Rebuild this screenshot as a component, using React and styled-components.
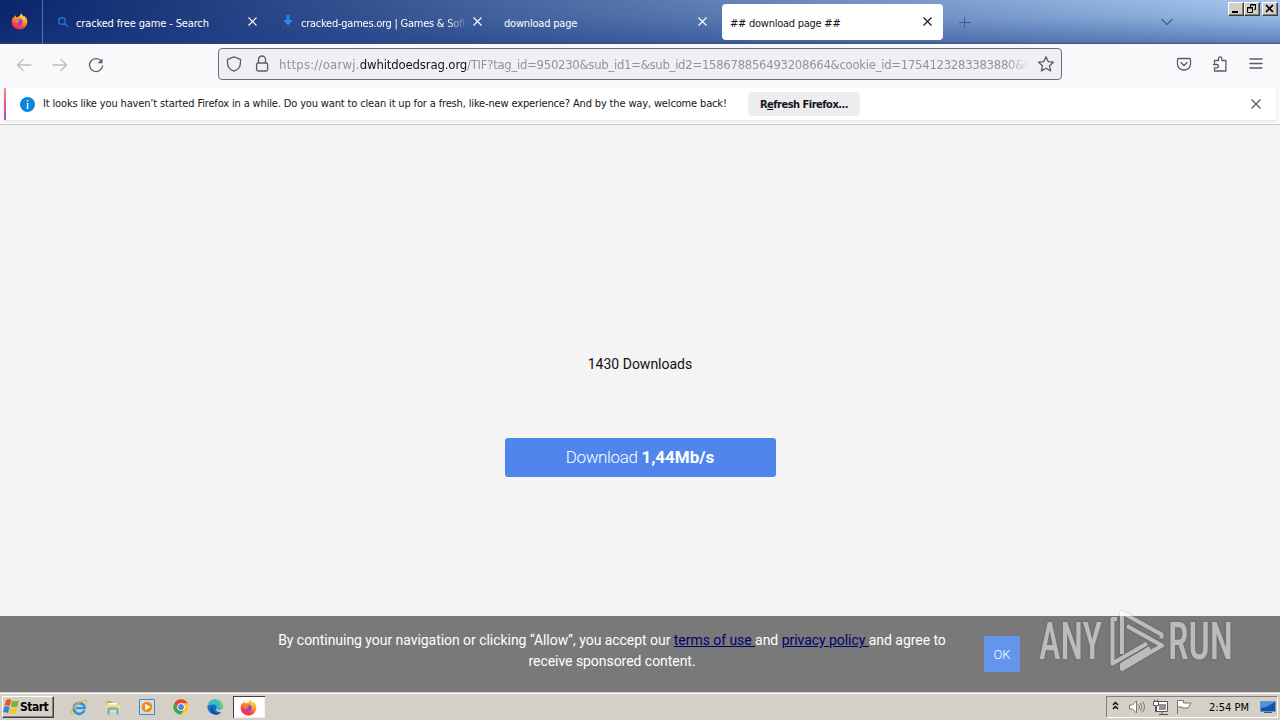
import React from "react";
import styled, { createGlobalStyle } from "styled-components";

const GlobalStyle = createGlobalStyle`
  * {
    box-sizing: border-box;
  }
  body {
    margin: 0;
    overflow: hidden;
    font-family: "DejaVu Sans Condensed", "DejaVu Sans", sans-serif;
    font-stretch: condensed;
    font-size: 11px;
    color: #15141a;
  }
  svg {
    display: block;
    flex: none;
  }
`;

const Desktop = styled.div`
  display: flex;
  flex-direction: column;
  width: 1280px;
  height: 720px;
  overflow: hidden;
`;

const Text = styled.span`
  white-space: pre;
  letter-spacing: ${p => p.$track || 0}px;
`;

/* ---------- tab strip ---------- */

const TitleBar = styled.div`
  display: flex;
  height: 44px;
  background:
    linear-gradient(to bottom, transparent 42px, rgba(60, 70, 100, 0.55) 43px),
    linear-gradient(to bottom, rgba(25, 60, 140, 0) 0%, rgba(25, 60, 140, 0.12) 40%, rgba(25, 60, 140, 0.52) 100%),
    linear-gradient(to right, #0a246a, #a6caf0);
`;

const FirefoxView = styled.div`
  display: flex;
  align-items: center;
  justify-content: center;
  width: 43px;
  padding: 0 3px 1px 0;
  border-right: 1px solid #5a6fa5;
`;

const Tabs = styled.div`
  display: flex;
  padding-left: 2px;
`;

const Tab = styled.div`
  display: flex;
  align-items: center;
  width: ${p => (p.$active ? 221 : 225)}px;
  height: ${p => (p.$active ? 36 : 44)}px;
  margin: ${p => (p.$active ? "4px 2px" : "0")};
  padding: ${p => (p.$active ? "2px 11px 0 8px" : "2px 13px 0 9px")};
  border-radius: 4px;
  background: ${p => (p.$active ? "#fff" : "transparent")};
  color: ${p => (p.$active ? "#15141a" : "#fff")};
`;

const TabIcon = styled.span`
  width: 19px;
  margin-left: 3px;
  padding-bottom: 2px;
`;

const TabLabel = styled.div`
  flex: 1;
  overflow: hidden;
  white-space: nowrap;
  mask-image: ${p => (p.$fade ? "linear-gradient(to left, transparent, #000 22px)" : "none")};
  margin-right: ${p => (p.$fade ? 5 : 10)}px;
`;

const TabClose = styled.span`
  padding-bottom: 3px;
`;

const StripButton = styled.div`
  display: flex;
  align-items: center;
  justify-content: center;
  width: 40px;
  height: 44px;
`;

const Spacer = styled.div`
  flex: 1;
`;

const WindowButtons = styled.div`
  display: flex;
  margin: 2px 2px 0 41px;
`;

const WindowButton = styled.div`
  display: flex;
  width: 16px;
  height: 14px;
  margin-left: ${p => p.$gap || 0}px;
  background: #d4d0c8;
  border: 1px solid;
  border-color: #fff #404040 #404040 #fff;
  box-shadow: inset -1px -1px #808080;
`;

/* ---------- navigation ---------- */

const NavBar = styled.div`
  display: flex;
  align-items: center;
  height: 44px;
  padding: 0 16px 4px;
  background: #f9f9fb;
`;

const NavButtons = styled.div`
  display: flex;
  gap: 20px;
  width: 202px;
  padding-top: 1px;
`;

const UrlBar = styled.div`
  display: flex;
  align-items: center;
  width: 844px;
  height: 32px;
  padding: 0 7px;
  border: 1px solid #6c6b73;
  border-radius: 4px;
  background: #f0f0f4;
`;

const Address = styled.div`
  flex: 1;
  margin: 0 7px 0 9px;
  padding-top: 1px;
  overflow: hidden;
  white-space: nowrap;
  font-size: 13px;
  color: #93929a;
  mask-image: linear-gradient(to left, transparent, #000 24px);
`;

const Domain = styled.span`
  color: #15141a;
`;

const ToolIcons = styled.div`
  display: flex;
  gap: 20px;
`;

/* ---------- notification ---------- */

const NoticeStrip = styled.div`
  height: 37px;
  padding: 0 4px;
  background: #f9f9fb;
  border-bottom: 1px solid #cccccf;
`;

const Notice = styled.div`
  display: flex;
  align-items: center;
  height: 32px;
  padding: 0 15px 0 14px;
  border-left: 2px solid;
  border-image: linear-gradient(to bottom, #ff9a6c, #e7548f 45%, #9059d6) 1;
  background: #fff;
  box-shadow: 0 1px 2px rgba(58, 57, 68, 0.12);
`;

const NoticeText = styled.div`
  width: 713px;
  padding: 0 0 2px 8px;
`;

const RefreshButton = styled.div`
  width: 112px;
  height: 24px;
  line-height: 25px;
  text-align: center;
  font-weight: 700;
  border-radius: 4px;
  background: #ededf0;
`;

/* ---------- page ---------- */

const Page = styled.main`
  display: flex;
  flex-direction: column;
  align-items: center;
  height: 491px;
  padding-top: 229px;
  background: #f4f4f4;
  font-family: Roboto, sans-serif;
  font-stretch: normal;
`;

const Count = styled.div`
  height: 20px;
  line-height: 20px;
  font-size: 14px;
  color: #111;
`;

const DownloadButton = styled.div`
  width: 271px;
  height: 39px;
  margin-top: 64px;
  line-height: 39px;
  text-align: center;
  font-size: 17px;
  font-weight: 300;
  color: #fff;
  border-radius: 3px;
  background: #5086ec;
  b {
    font-weight: 700;
  }
`;

const Consent = styled.div`
  display: flex;
  height: 76px;
  padding: 14px 0 0 262px;
  background: #797979;
  font-family: Roboto, sans-serif;
  font-stretch: normal;
  color: #fff;
`;

const ConsentText = styled.div`
  width: 700px;
  text-align: center;
  font-size: 14px;
  letter-spacing: -0.045px;
  line-height: 21px;
  a {
    color: #00006e;
    text-decoration: underline;
  }
`;

const OkButton = styled.div`
  width: 36px;
  height: 36px;
  margin: 6px 0 0 22px;
  line-height: 37px;
  text-align: center;
  font-size: 13px;
  font-weight: 300;
  background: #6495ed;
`;

const Watermark = styled.svg`
  position: absolute;
  left: 1030px;
  top: 604px;
  filter: drop-shadow(0 0 1px rgba(0, 0, 0, 0.5));
`;

/* ---------- taskbar ---------- */

const Taskbar = styled.div`
  display: flex;
  align-items: center;
  height: 28px;
  padding: 2px 2px 0 2px;
  background: #d4d0c8;
  box-shadow: inset 0 1px #d4d0c8, inset 0 2px #fff;
  color: #000;
`;

const StartButton = styled.div`
  display: flex;
  align-items: center;
  width: 52px;
  height: 22px;
  font-weight: 700;
  font-size: 12px;
  border: 1px solid;
  border-color: #fff #404040 #404040 #fff;
  box-shadow: inset -1px -1px #808080;
`;

const QuickLaunch = styled.div`
  display: flex;
  padding-left: 8px;
`;

const TaskItem = styled.div`
  display: flex;
  align-items: center;
  justify-content: center;
  width: ${p => (p.$active ? 32 : 34)}px;
  height: 22px;
  margin-left: ${p => (p.$active ? 1 : 0)}px;
  padding-right: ${p => (p.$active ? 1 : 0)}px;
  background: ${p => (p.$active ? "#fff" : "transparent")};
  box-shadow: ${p => (p.$active ? "inset 1px 1px #404040, inset -1px -1px #f4f2ee" : "none")};
`;

const Tray = styled.div`
  display: flex;
  align-items: center;
  width: 172px;
  height: 22px;
  padding-left: 5px;
  border: 1px solid;
  border-color: #808080 #fff #fff #808080;
`;

const Clock = styled.div`
  width: 58px;
  padding-right: 4px;
  text-align: center;
`;

/* ---------- icons ---------- */

const Cross = ({ color = "#fff", size = 9 }) => (
  <svg width={size} height={size} viewBox="0 0 9 9" stroke={color} strokeWidth="1.1">
    <path d="M.5.5l8 8M8.5.5l-8 8" />
  </svg>
);

const Stroke = ({ size = 16, color = "#5b5b66", width = 1.3, children }) => (
  <svg
    width={size}
    height={size}
    viewBox="0 0 16 16"
    fill="none"
    stroke={color}
    strokeWidth={width}
    strokeLinecap="round"
    strokeLinejoin="round"
  >
    {children}
  </svg>
);

const FirefoxLogo = () => (
  <svg width="17" height="17" viewBox="0 0 17 17">
    <defs>
      <linearGradient id="fox" x1=".8" y1="0" x2=".3" y2="1">
        <stop offset="0" stopColor="#ffe34a" />
        <stop offset=".45" stopColor="#ff9528" />
        <stop offset=".75" stopColor="#fa3c4c" />
        <stop offset="1" stopColor="#e22775" />
      </linearGradient>
    </defs>
    <path
      fill="url(#fox)"
      d="M10.2.3c.4 1.8 1.5 2.3 2.6 3.5.2-.6.1-1 0-1.4 2 1.3 3.5 3.6 3.5 6.1 0 4.5-3.5 8-7.9 8S.7 13 .7 8.8c0-2 .6-3.7 1.7-5 0 .5 0 .8.3 1.1.4-1.3 1.1-2 2-2.6-.1.8.1 1.4.5 1.9C7 4.2 9.5 3 10.2.3z"
    />
    <circle cx="8.3" cy="8.9" r="3.2" fill="#8645d8" />
    <path fill="#ff7b2e" d="M3.5 6.2c1.500-1.200 3.200-1 4.300 0 .8.5 1.500.4 1.600.8-.3.7-1.300.8-1.900 1.300-.5.5-.3 1.300.2 1.700-2.300.9-3.800-1-4.200-3.800z" />
    <path fill="#ffcb3c" d="M10.2.3c-.9 1.100-.7 2.600.2 3.700 1.500 1 2.600 2.700 2.300 5 1.300-1.600 1-3.900.1-5.200-1.100-1.200-2.200-1.700-2.600-3.500z" />
  </svg>
);

const WindowsFlag = () => (
  <svg width="17" height="16" viewBox="0 0 17 16">
    <path fill="#e8542a" d="M3 1.200C4.700 0 6.500 0 8.200 1L6.800 7C5 6 3.500 6 1.500 7z" />
    <path fill="#7cb82f" d="M9 1.500c2 1.200 4.200 1.100 7 0L14.500 7.500c-2.500 1-4.600.9-6.700-.200z" />
    <path fill="#3d7fd1" d="M1.200 8c1.900-1 3.600-.9 5.400.1L5 14C3.300 13-.3 13 0 13.600z" />
    <path fill="#f9c32d" d="M7.500 8.500c2 1.100 4.200 1.200 6.700.200l-1.600 5.600c-2.400 1.100-4.500.9-6.700-.1z" />
  </svg>
);

const IeLogo = () => (
  <svg width="18" height="18" viewBox="0 0 18 18" fill="none">
    <path d="M14.3 12.4A5.400 5.400 0 1 1 14.6 10H6" stroke="#2b93d8" strokeWidth="2.700" />
    <path d="M5 8.3h8" stroke="#a8dbf7" strokeWidth="1" />
    <path d="M3.3 15.3C-1 18.500.6 11.500 6.300 6.700 11.500 2.200 17.500.1 16.300 4.900" stroke="#e8b62f" strokeWidth="1.300" />
  </svg>
);

const ExplorerLogo = () => (
  <svg width="18" height="18" viewBox="0 0 18 18">
    <path fill="#e5c15c" d="M2 3h6l1 1.500h7V14H2z" />
    <path fill="#fff" d="M4 5h9v3H4z" />
    <path fill="#52b152" d="M4 3.500h3v1.200H4z" />
    <path fill="#f4dc88" d="M1.500 6.500h15l-.500 7.500h-14z" />
    <path fill="none" stroke="#69b3dd" strokeWidth="2.400" d="M4.500 16.500v-4.700q0-1.300 1.500-1.300h6q1.500 0 1.500 1.300v4.700" />
  </svg>
);

const PlayerLogo = () => (
  <svg width="18" height="18" viewBox="0 0 18 18">
    <path fill="#c7e0f2" stroke="#4a87b8" d="M1.500 1.500h15v15h-15z" />
    <circle cx="9" cy="9" r="5.700" fill="#f38a19" stroke="#fff4de" strokeWidth=".5" />
    <path fill="#fff" d="M7.200 5.700v6.600L12.500 9z" />
  </svg>
);

const ChromeLogo = () => (
  <svg width="16" height="16" viewBox="0 0 16 16">
    <circle cx="8" cy="8" r="7.600" fill="#fcc934" />
    <path fill="#ea4335" d="M1.400 4.200A7.600 7.600 0 0 1 14.6 4.200H8L4.700 9.900z" />
    <path fill="#34a853" d="M1.400 4.200A7.600 7.600 0 0 0 8 15.600L11.300 9.900 4.700 9.900z" />
    <circle cx="8" cy="8" r="3.800" fill="#fff" />
    <circle cx="8" cy="8" r="2.900" fill="#4285f4" />
  </svg>
);

const EdgeLogo = () => (
  <svg width="16" height="16" viewBox="0 0 16 16">
    <circle cx="8" cy="8" r="7.600" fill="#1673c9" />
    <path fill="#35c1c4" d="M.5 7.500C1 3.200 4.200.4 8 .4c4.500 0 7.600 2.900 7.600 6.300 0 2.300-1.600 3.900-4 3.900-1.800 0-2.400-.7-2.100-1.300.9-1.800-.5-3.900-3.100-3.900C3.600 5.400 1.500 6.300.5 7.500z" />
    <path fill="#65d563" d="M10 .7c3.400.8 5.600 3.300 5.600 6 0 2-1.300 3.400-3.100 3.800 1.300-3 .8-6.800-2.500-9.800z" />
    <path fill="#114a8b" d="M6.300 7.200c-1.800 3 .7 7 4.500 6.900 1.400 0 2.400-.5 3.300-1.100-2 3.200-6.300 3.300-8.700 1.300-2.300-2-1.900-5.800.9-7.100z" />
    <path fill="#d4d0c8" d="M9.500 9.300c-.3.7.3 1.500 2.100 1.500 1.500 0 2.700-.6 3.400-1.600l1 1.500-2 2c-3 .8-6-.9-4.500-3.400z" />
  </svg>
);

const tabs = [
  {
    title: "cracked free game - Search",
    track: -0.14,
    icon: (
      <svg width="12" height="12" viewBox="0 0 12 12" fill="none" stroke="#2672ce" strokeWidth="1.500">
        <circle cx="5" cy="5" r="3.300" />
        <path d="M7.5 7.500l3.200 3.200" />
      </svg>
    )
  },
  {
    title: "cracked-games.org | Games & Software",
    track: -0.25,
    fade: true,
    icon: (
      <svg width="13" height="14" viewBox="0 0 13 14">
        <path fill="#2389ec" d="M4.500 0h3v5h3.500L6 10.500 1 5h3.500z" />
        <path fill="none" stroke="#3b4a7e" strokeWidth="1.500" d="M1 10v2.500h11V10" />
      </svg>
    )
  },
  { title: "download page", track: -0.2 },
  { title: "## download page ##", track: -0.25, active: true }
];

const TabStrip = () => (
  <TitleBar>
    <FirefoxView>
      <FirefoxLogo />
    </FirefoxView>
    <Tabs>
      {tabs.map(tab => (
        <Tab key={tab.title} $active={tab.active}>
          {tab.icon && <TabIcon>{tab.icon}</TabIcon>}
          <TabLabel $fade={tab.fade}>
            <Text $track={tab.track}>{tab.title}</Text>
          </TabLabel>
          <TabClose>
            <Cross color={tab.active ? "#15141a" : "#fff"} />
          </TabClose>
        </Tab>
      ))}
    </Tabs>
    <StripButton>
      <svg width="12" height="12" viewBox="0 0 12 12" stroke="#455d8c">
        <path d="M5.500 1v11M0 6.500h12" />
      </svg>
    </StripButton>
    <Spacer />
    <StripButton>
      <svg width="12" height="8" viewBox="0 0 12 8" fill="none" stroke="#466596" strokeWidth="1.500">
        <path d="M.5 1L6 6.500 11.500 1" />
      </svg>
    </StripButton>
    <WindowButtons>
      <WindowButton>
        <svg width="14" height="12">
          <path d="M3 8h6v2H3z" />
        </svg>
      </WindowButton>
      <WindowButton>
        <svg width="14" height="12" fill="none" stroke="#000">
          <path d="M5.500 4V1.500h5v5H9M5 2h6M2.500 4.500h5v5h-5zM2 5h6" />
        </svg>
      </WindowButton>
      <WindowButton $gap={2}>
        <svg width="14" height="12" stroke="#000" strokeWidth="1.700">
          <path d="M3 2l7 7M10 2L3 9" />
        </svg>
      </WindowButton>
    </WindowButtons>
  </TitleBar>
);

const Navigation = () => (
  <NavBar>
    <NavButtons>
      <Stroke color="#bdbdc2">
        <path d="M15 8H1.500M7 2.500L1.500 8 7 13.500" />
      </Stroke>
      <Stroke color="#bdbdc2">
        <path d="M1 8h13.500M9 2.500L14.500 8 9 13.500" />
      </Stroke>
      <Stroke>
        <path d="M13.300 4.200A6.500 6.500 0 1 0 14.500 9" />
        <path fill="#5b5b66" d="M14.500 1.500v4.800H9.700z" stroke="none" />
      </Stroke>
    </NavButtons>
    <UrlBar>
      <Stroke>
        <path d="M8 .8l6.500 2.600v3c0 4-2.500 7.300-6.500 8.800C4 13.700 1.500 10.400 1.500 6.400v-3z" />
      </Stroke>
      <svg width="28" height="18" viewBox="0 0 28 18" fill="none" stroke="#5b5b66" strokeWidth="1.300">
        <rect x="14.600" y="8" width="11" height="8" rx="1.500" />
        <path d="M16.500 8V4.500a3.500 3.500 0 0 1 7 0V8" />
      </svg>
      <Address>
        <Text $track={0.22}>https://oarwj.</Text>
        <Domain>
          <Text $track={-0.14}>dwhitdoedsrag.org</Text>
        </Domain>
        <Text $track={-0.29}>/TIF?tag_id=950230&amp;sub_id1=&amp;sub_id2=158678856493208664&amp;cookie_id=1754123283383880&amp;l</Text>
      </Address>
      <Stroke>
        <path d="M8 .8l2.200 4.800 5.200.6-3.900 3.500 1.100 5.200L8 12.300l-4.600 2.600 1.100-5.200L.6 6.200l5.200-.6z" />
      </Stroke>
    </UrlBar>
    <Spacer />
    <ToolIcons>
      <Stroke>
        <path d="M2.500 2.500h11q1 0 1 1V8a6.500 6 0 0 1-13 0V3.500q0-1 1-1zM5 6.500l3 3 3-3" />
      </Stroke>
      <Stroke>
        <path d="M2.500 7V4.500h4V2.500a1.700 1.700 0 0 1 3.400 0v2h4v10.500h-11.400v-3.200h2.300a1.600 1.600 0 0 0 0-3.300H1.500" />
      </Stroke>
      <Stroke>
        <path d="M2 3h12M2 7.500h12M2 12h12" />
      </Stroke>
    </ToolIcons>
  </NavBar>
);

const Notification = () => (
  <NoticeStrip>
    <Notice>
      <svg width="15" height="15" viewBox="0 0 15 15">
        <circle cx="7.500" cy="7.500" r="7.500" fill="#0a84e0" />
        <path fill="#fff" d="M6.800 3h1.500v1.500H6.800zM6.800 6h1.500v6H6.800z" />
      </svg>
      <NoticeText>
        <Text $track={-0.15}>
          It looks like you haven’t started Firefox in a while. Do you want to clean it up for a fresh, like-new experience? And by the way, welcome back!
        </Text>
      </NoticeText>
      <RefreshButton>
        <Text $track={-0.5}>
          R<u>e</u>fresh Firefox...
        </Text>
      </RefreshButton>
      <Spacer />
      <Cross color="#5b5b66" size={10} />
    </Notice>
  </NoticeStrip>
);

const AnyRun = () => (
  <Watermark
    width="250"
    height="84"
    viewBox="0 0 250 84"
    fill="#fff"
    opacity=".5"
    fontFamily="Roboto, sans-serif"
    fontWeight="500"
    fontSize="51"
  >
    <text x="9" y="55" textLength="63" lengthAdjust="spacingAndGlyphs">ANY</text>
    <text x="138" y="55" textLength="65" lengthAdjust="spacingAndGlyphs">RUN</text>
    <g fill="none" stroke="#fff" strokeWidth="4" strokeLinejoin="round">
      <path d="M87 15h-4.500v44.500L117 39.500" />
      <path d="M92 50V8.500L131.500 30.500v4" />
      <path d="M97 22l35 19.500L92 65v-4.500L120 44" />
    </g>
  </Watermark>
);

const TaskBar = () => (
  <Taskbar>
    <StartButton>
      <WindowsFlag />
      <Text $track={-0.5}>Start</Text>
    </StartButton>
    <QuickLaunch>
      <TaskItem>
        <IeLogo />
      </TaskItem>
      <TaskItem>
        <ExplorerLogo />
      </TaskItem>
      <TaskItem>
        <PlayerLogo />
      </TaskItem>
      <TaskItem>
        <ChromeLogo />
      </TaskItem>
      <TaskItem>
        <EdgeLogo />
      </TaskItem>
      <TaskItem $active>
        <FirefoxLogo />
      </TaskItem>
    </QuickLaunch>
    <Spacer />
    <Tray>
      <svg width="90" height="20" viewBox="0 0 90 20" fill="none" stroke="#000">
        <path d="M1 8l2.500-2.500L6 8M1 12l2.500-2.500L6 12" strokeWidth="1.400" />
        <g stroke="#777">
          <path fill="#fff" d="M17.500 8h3l4-4v12l-4-4h-3z" />
          <path d="M26.500 7.500q2 2.500 0 5M28.500 6q3 4 0 8M30.500 4.500q4 5.500 0 11" />
          <path fill="#fff" d="M44.500 4.500h11v10h-11z" stroke="#555" />
          <path fill="#909090" stroke="none" d="M47 7h7v6h-7z" />
          <path d="M47 17.500h9M50 15v2" stroke="#555" />
          <path fill="#fff" d="M41.500 4.500h5v4h-2v6h-1v-6h-2zM42.500 2.500v2M45.500 2.500v2" stroke="#555" />
          <path fill="#fff" d="M65.500 17V3.500h6v2.500h7.500l-3 5h-6V10h-4" />
        </g>
      </svg>
      <Clock>
        <Text>2:54 PM</Text>
      </Clock>
      <svg width="16" height="14" viewBox="0 0 16 14">
        <path fill="#1552a8" stroke="#6f95be" d="M.5 1.500h15v10H.5z" />
        <path fill="#4b93e3" d="M1 2h14l-9 5-5 1z" />
        <path fill="#555" d="M4 12h8v1H4z" />
      </svg>
    </Tray>
  </Taskbar>
);

const App = () => (
  <Desktop>
    <GlobalStyle />
    <TabStrip />
    <Navigation />
    <Notification />
    <Page>
      <Count>1430 Downloads</Count>
      <DownloadButton>
        <Text $track={-0.35}>Download </Text>
        <b>1,44Mb/s</b>
      </DownloadButton>
    </Page>
    <Consent>
      <ConsentText>
        By continuing your navigation or clicking “Allow”, you accept our <a>terms of use </a>and <a>privacy policy </a>and agree to
        <br />
        receive sponsored content.
      </ConsentText>
      <OkButton>OK</OkButton>
    </Consent>
    <TaskBar />
    <AnyRun />
  </Desktop>
);

export default App;
